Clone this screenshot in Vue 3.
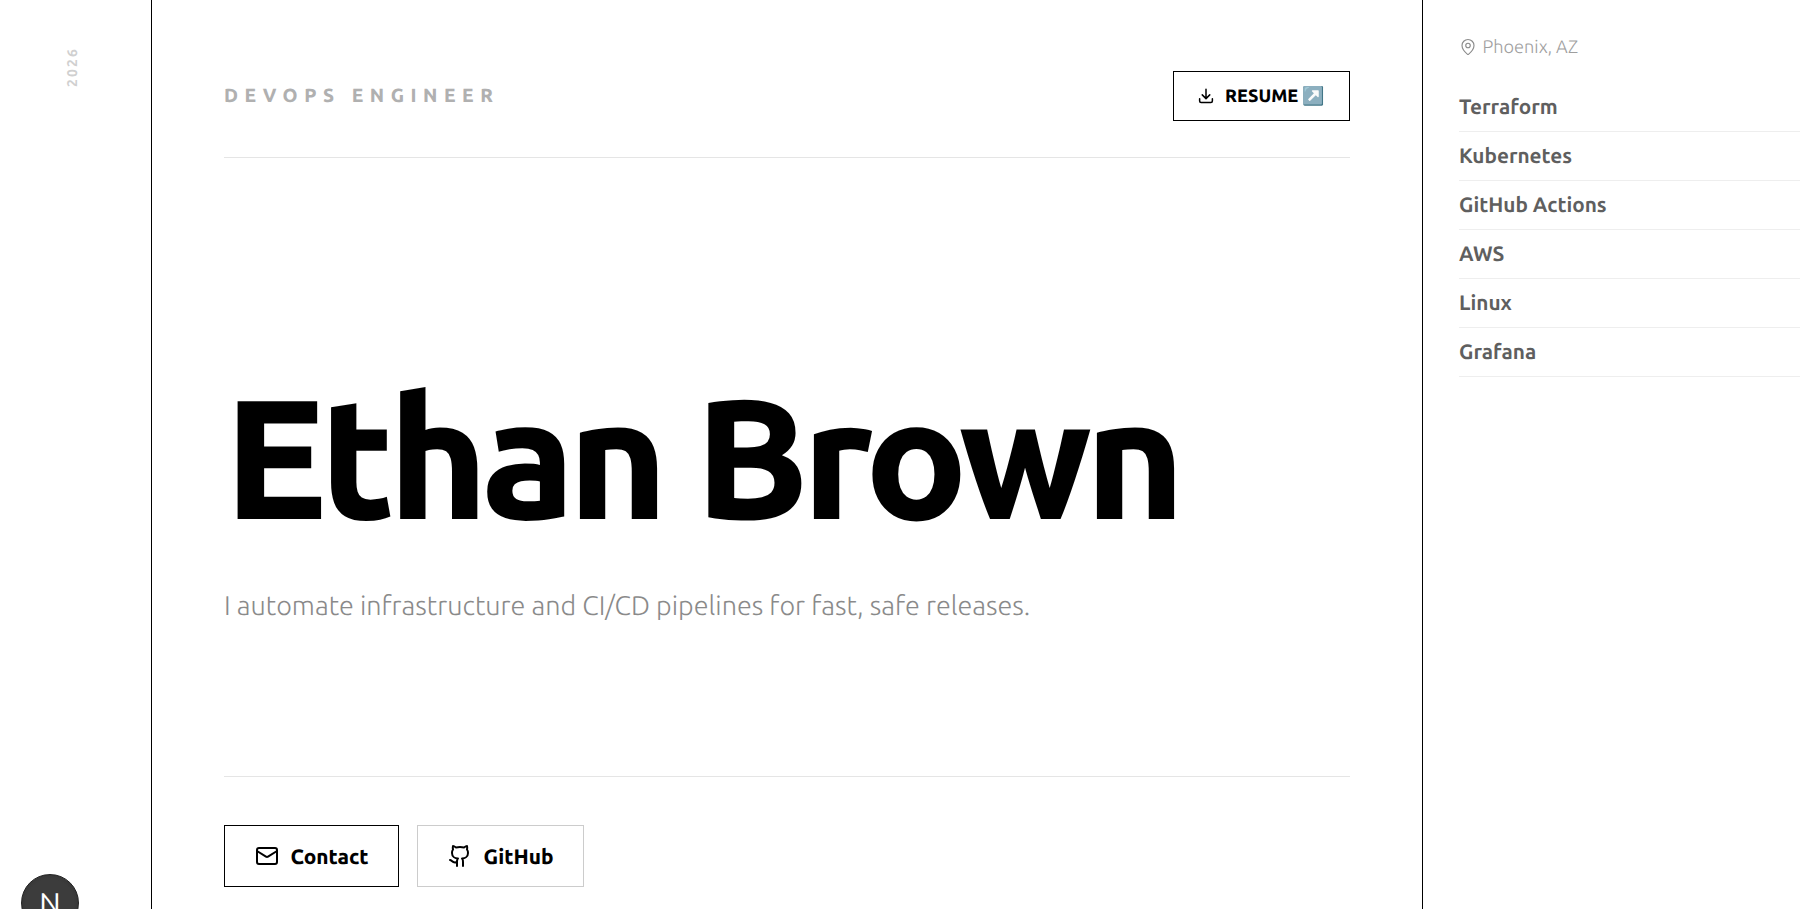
<template>
  <div class="page">
    <aside class="rail">
      <span class="year">2026</span>
    </aside>

    <main class="main">
      <header class="top">
        <span class="role">DEVOPS ENGINEER</span>
        <a class="resume">
          <svg class="ico" viewBox="0 0 24 24" width="18" height="18">
            <path d="M12 3v12M7 10.5l5 5 5-5M3.5 15.5v3a2 2 0 0 0 2 2h13a2 2 0 0 0 2-2v-3" />
          </svg>
          <span>RESUME ↗️</span>
        </a>
      </header>

      <section class="hero">
        <h1 class="name">Ethan Brown</h1>
        <p class="tagline">I automate infrastructure and CI/CD pipelines for fast, safe releases.</p>
      </section>

      <footer class="actions">
        <a class="btn primary">
          <svg class="ico" viewBox="0 0 24 24" width="24" height="24">
            <rect x="2" y="4" width="20" height="16" rx="2" />
            <path d="M22 7l-8.97 5.7a1.94 1.94 0 0 1-2.06 0L2 7" />
          </svg>
          <span>Contact</span>
        </a>
        <a class="btn">
          <svg class="ico" viewBox="0 0 24 24" width="24" height="24">
            <path d="M15 22v-4a4.8 4.8 0 0 0-1-3.5c3 0 6-2 6-5.5.08-1.25-.27-2.48-1-3.5.28-1.15.28-2.35 0-3.5 0 0-1 0-3 1.5-2.64-.5-5.36-.5-8 0C6 2 5 2 5 2c-.3 1.15-.3 2.35 0 3.5A5.4 5.4 0 0 0 4 9c0 3.5 3 5.5 6 5.5-.39.49-.68 1.05-.85 1.65-.17.6-.22 1.23-.15 1.85v4" />
            <path d="M9 18c-4.51 2-5-2-7-2" />
          </svg>
          <span>GitHub</span>
        </a>
      </footer>
    </main>

    <aside class="side">
      <div class="loc">
        <svg class="ico pin" viewBox="0 0 24 24" width="18" height="18">
          <path d="M20 10c0 5-5.5 10.2-7.4 11.8a1 1 0 0 1-1.2 0C9.5 20.2 4 15 4 10a8 8 0 0 1 16 0" />
          <circle cx="12" cy="10" r="3" />
        </svg>
        <span>Phoenix, AZ</span>
      </div>
      <ul class="stack">
        <li v-for="item in stack" :key="item">{{ item }}</li>
      </ul>
    </aside>

    <div class="devbadge"><span>N</span></div>
  </div>
</template>

<script setup>
const stack = ['Terraform', 'Kubernetes', 'GitHub Actions', 'AWS', 'Linux', 'Grafana']
</script>

<style>
html, body {
  margin: 0;
  background: #fff;
  overflow: hidden;
}
</style>

<style scoped>
.page {
  position: relative;
  display: grid;
  grid-template-columns: 151px 1fr 377px;
  height: 909px;
  overflow: hidden;
  font-family: Ubuntu, "Noto Sans", "Open Sans", sans-serif;
  text-rendering: geometricPrecision;
  color: #000;
}

.rail {
  display: flex;
  justify-content: center;
  padding-top: 47px;
  padding-right: 7px;
}

.year {
  writing-mode: vertical-rl;
  transform: rotate(180deg);
  height: 40px;
  font-size: 14px;
  letter-spacing: 2.1px;
  font-weight: 700;
  color: #d0d0d0;
}

.main {
  display: flex;
  flex-direction: column;
  padding: 0 72px;
  border-left: 1px solid #000;
  border-right: 1px solid #000;
}

.top {
  display: flex;
  align-items: center;
  justify-content: space-between;
  padding: 71px 0 36px;
  border-bottom: 1px solid #e5e5e5;
}

.role {
  margin-bottom: 2px;
  font-size: 19px;
  font-weight: 900;
  letter-spacing: 6.55px;
  color: #b0b0b0;
}

.resume {
  display: flex;
  align-items: center;
  gap: 10px;
  height: 50px;
  box-sizing: border-box;
  padding: 0 24px 0 23px;
  border: 1px solid #000;
  font-size: 18px;
  font-weight: 900;
}

.ico {
  fill: none;
  stroke: currentColor;
  stroke-width: 2;
  stroke-linecap: round;
  stroke-linejoin: round;
  flex: none;
}

.hero {
  flex: 1;
  display: flex;
  flex-direction: column;
  justify-content: center;
  padding-top: 2px;
}

.name {
  margin: 57px 0 0;
  font-size: 170px;
  line-height: 1;
  font-weight: 900;
  letter-spacing: -7.13px;
  white-space: nowrap;
}

.tagline {
  margin: 49px 0 0;
  font-size: 27px;
  font-weight: 300;
  color: #8a8a8a;
}

.actions {
  display: flex;
  gap: 18px;
  padding: 48px 0 22px;
  border-top: 1px solid #e5e5e5;
}

.btn {
  display: flex;
  align-items: center;
  gap: 12px;
  height: 62px;
  box-sizing: border-box;
  padding: 0 29.5px;
  border: 1px solid #ccc;
  font-size: 20.8px;
  font-weight: 900;
}

.btn.primary {
  border-color: #000;
}

.side {
  padding: 0 0 0 36px;
}

.loc {
  display: flex;
  align-items: center;
  gap: 5.5px;
  height: 24px;
  margin-top: 35px;
  font-size: 18.2px;
  font-weight: 300;
  color: #9e9e9e;
}

.pin {
  stroke-width: 1.5;
  color: #8a8a8a;
}

.stack {
  list-style: none;
  margin: 24px 0 0;
  padding: 0;
}

.stack li {
  height: 49px;
  padding-top: 12px;
  box-sizing: border-box;
  line-height: 24px;
  font-size: 20.8px;
  font-weight: 700;
  color: #5f5f5f;
  border-bottom: 1px solid #eee;
}

.devbadge {
  position: absolute;
  left: 21px;
  top: 874px;
  width: 58px;
  height: 58px;
  border-radius: 50%;
  background: radial-gradient(circle, #3c3c3c 60%, #2c2c2c);
  border: 1px solid #222;
  box-sizing: border-box;
  display: flex;
  align-items: center;
  justify-content: center;
  color: #fff;
  font-size: 30px;
}
</style>
